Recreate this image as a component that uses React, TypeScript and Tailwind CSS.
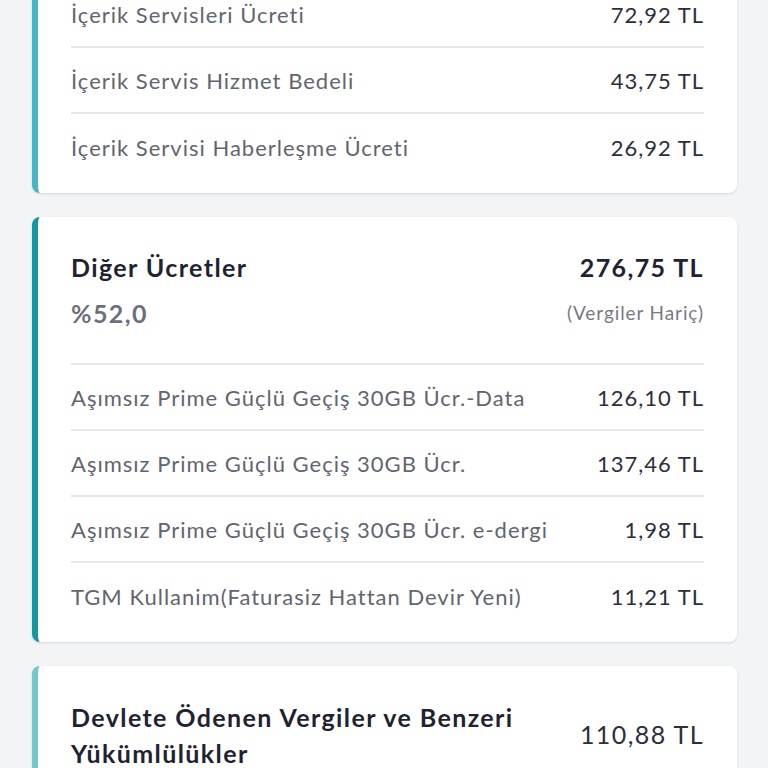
const font = { fontFamily: 'Lato, "Noto Sans", sans-serif' };

interface Line {
  label: string;
  amount: string;
}

const contentFees: Line[] = [
  { label: 'İçerik Servisleri Ücreti', amount: '72,92 TL' },
  { label: 'İçerik Servis Hizmet Bedeli', amount: '43,75 TL' },
  { label: 'İçerik Servisi Haberleşme Ücreti', amount: '26,92 TL' },
];

const otherFees: Line[] = [
  { label: 'Aşımsız Prime Güçlü Geçiş 30GB Ücr.-Data', amount: '126,10 TL' },
  { label: 'Aşımsız Prime Güçlü Geçiş 30GB Ücr.', amount: '137,46 TL' },
  { label: 'Aşımsız Prime Güçlü Geçiş 30GB Ücr. e-dergi', amount: '1,98 TL' },
  { label: 'TGM Kullanim(Faturasiz Hattan Devir Yeni)', amount: '11,21 TL' },
];

function Rows({ items }: { items: Line[] }) {
  return (
    <div>
      {items.map((item, i) => (
        <div
          key={item.label}
          className={`flex items-center justify-between h-[66px] ${i < items.length - 1 ? 'border-b-2 border-[#e7e8eb]' : ''}`}
        >
          <span className="text-[22px] text-[#62656e] tracking-[1px] whitespace-nowrap">{item.label}</span>
          <span className="text-[22px] text-[#2b2f3b] tracking-[1px] whitespace-nowrap">{item.amount}</span>
        </div>
      ))}
    </div>
  );
}

export default function App() {
  return (
    <div style={font} className="min-h-screen bg-[#f3f4f6] pl-8 pr-[31px] overflow-hidden">
      {/* Content services card, partly scrolled out */}
      <div className="-mt-[31px] bg-white rounded-lg border-l-[6px] border-[#46b5c5] px-[33px] pt-[13px] pb-[13px] shadow-sm">
        <Rows items={contentFees} />
      </div>

      {/* Other fees */}
      <div className="mt-6 bg-white rounded-lg border-l-[6px] border-[#15979f] px-[33px] pb-[13px] shadow-sm">
        <div className="flex justify-between pt-[35px] pb-[35px] border-b-2 border-[#e7e8eb]">
          <div>
            <div className="text-[25px] leading-[30px] font-bold tracking-[1.4px] text-[#1f2331]">Diğer Ücretler</div>
            <div className="mt-4 text-[25px] leading-[30px] font-bold tracking-[1.4px] text-[#6c707c]">%52,0</div>
          </div>
          <div className="flex flex-col items-end">
            <div className="text-[25px] leading-[30px] font-bold tracking-[1.4px] text-[#1f2331]">276,75 TL</div>
            <div className="mt-4 text-[19px] leading-[30px] tracking-[0.9px] text-[#777a82]">(Vergiler Hariç)</div>
          </div>
        </div>
        <Rows items={otherFees} />
      </div>

      {/* Taxes */}
      <div className="mt-6 bg-white rounded-lg border-l-[6px] border-[#72c7cc] px-[33px] pt-[33px] pb-8 shadow-sm">
        <div className="flex items-center justify-between">
          <div className="max-w-[480px] text-[25px] leading-[36px] font-bold tracking-[1.4px] text-[#1f2331]">
            Devlete Ödenen Vergiler ve Benzeri Yükümlülükler
          </div>
          <div className="text-[25px] tracking-[1.4px] text-[#2b2f3b] shrink-0">110,88 TL</div>
        </div>
      </div>
    </div>
  );
}
